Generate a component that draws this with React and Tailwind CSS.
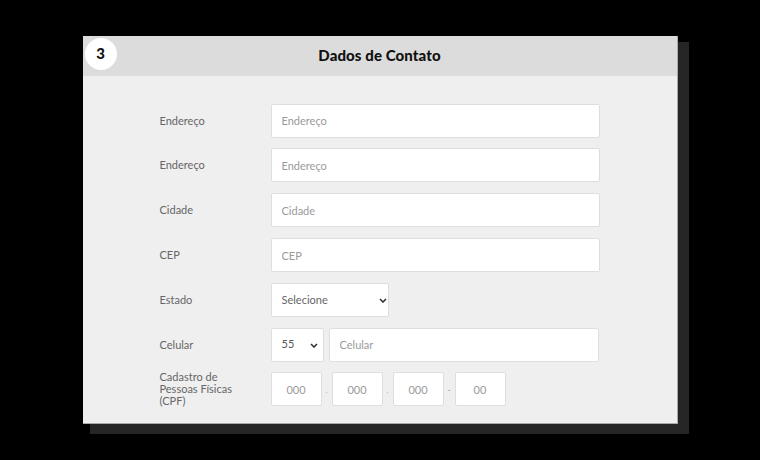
import { useState } from "react";

const inputClass =
  "h-[34px] bg-white border border-[#dedede] rounded-[2px] px-[10px] text-[11px] text-[#555] placeholder:text-[#9a9a9a] outline-none";

const Chevron = () => (
  <svg width="8" height="5" viewBox="0 0 8 5" className="pointer-events-none">
    <path d="M1 1l3 3 3-3" fill="none" stroke="#333" strokeWidth="1.6" />
  </svg>
);

const Row = ({ label, children }) => (
  <div className="flex items-center h-[34px]">
    <label className="w-[111px] shrink-0 text-[11px] leading-[12px] text-[#666] pr-4">
      {label}
    </label>
    {children}
  </div>
);

const ContactForm = () => {
  const [estado, setEstado] = useState("");
  const [ddi, setDdi] = useState("55");

  return (
    <div className="w-[595px] bg-[#efefef] border-r border-b border-[#a9a9a9] shadow-[9px_8px_0_2px_#262626]">
      {/* Header */}
      <div className="relative h-[40px] bg-[#dcdcdc] flex items-center justify-center">
        <div className="absolute left-[2px] top-[2px] w-[32px] h-[32px] rounded-full bg-white flex items-center justify-center text-[15px] font-black text-[#111]">
          3
        </div>
        <h2 className="text-[15px] font-black text-[#111] tracking-[0.1px]">
          Dados de Contato
        </h2>
      </div>

      {/* Body */}
      <div className="pt-[28px] pb-[17px] px-[77px] flex flex-col gap-[10.8px]">
        <Row label="Endereço">
          <input type="text" placeholder="Endereço" className={`${inputClass} flex-1`} />
        </Row>
        <Row label="Endereço">
          <input type="text" placeholder="Endereço" className={`${inputClass} flex-1`} />
        </Row>
        <Row label="Cidade">
          <input type="text" placeholder="Cidade" className={`${inputClass} flex-1`} />
        </Row>
        <Row label="CEP">
          <input type="text" placeholder="CEP" className={`${inputClass} flex-1`} />
        </Row>
        <Row label="Estado">
          <div className="relative w-[118px] flex">
            <select
              value={estado}
              onChange={(e) => setEstado(e.target.value)}
              className={`${inputClass} w-full appearance-none text-[#666]`}
            >
              <option value="">Selecione</option>
              <option value="SP">SP</option>
              <option value="RJ">RJ</option>
            </select>
            <span className="absolute right-[2px] top-[15px] flex">
              <Chevron />
            </span>
          </div>
        </Row>
        <Row label="Celular">
          <div className="relative w-[53px] flex">
            <select
              value={ddi}
              onChange={(e) => setDdi(e.target.value)}
              className={`${inputClass} w-full appearance-none`}
            >
              <option value="55">55</option>
              <option value="1">1</option>
            </select>
            <span className="absolute right-[6px] top-[15px] flex">
              <Chevron />
            </span>
          </div>
          <input
            type="text"
            placeholder="Celular"
            className={`${inputClass} ml-[5px] w-[270px]`}
          />
        </Row>
        <Row label="Cadastro de Pessoas Físicas (CPF)">
          <div className="flex items-center">
            <input type="text" placeholder="000" className={`${inputClass} w-[51px] text-center`} />
            <span className="w-[10px] text-center text-[10px] text-[#bbb]">.</span>
            <input type="text" placeholder="000" className={`${inputClass} w-[51px] text-center`} />
            <span className="w-[10px] text-center text-[10px] text-[#bbb]">.</span>
            <input type="text" placeholder="000" className={`${inputClass} w-[51px] text-center`} />
            <span className="w-[11px] text-center text-[10px] text-[#aaa]">-</span>
            <input type="text" placeholder="00" className={`${inputClass} w-[51px] text-center`} />
          </div>
        </Row>
      </div>
    </div>
  );
};

export default function App() {
  return (
    <div
      className="w-[760px] h-[460px] bg-black flex items-center justify-center"
      style={{ fontFamily: "Lato, 'Noto Sans', sans-serif" }}
    >
      <ContactForm />
    </div>
  );
}
